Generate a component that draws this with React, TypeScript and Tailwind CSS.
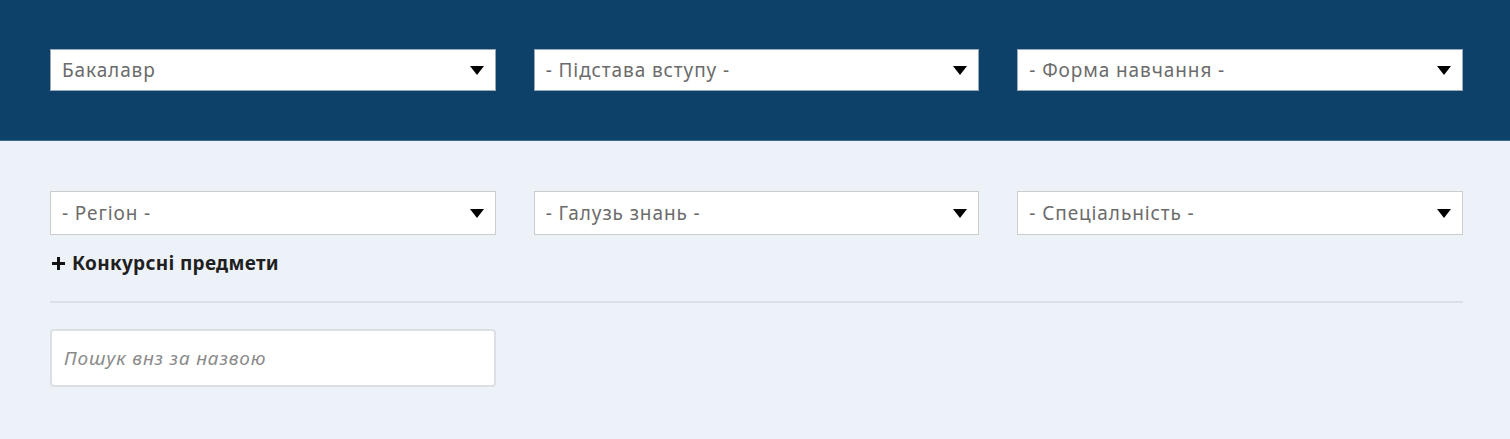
import { useState } from 'react';

const topSelects = ['Бакалавр', '- Підстава вступу -', '- Форма навчання -'];
const bottomSelects = ['- Регіон -', '- Галузь знань -', '- Спеціальність -'];

function Caret() {
  return (
    <svg width="14" height="9" viewBox="0 0 14 9" className="shrink-0">
      <path d="M0 0 H14 L7 9 Z" fill="#000" />
    </svg>
  );
}

function SelectBox({ label, dark }: { label: string; dark?: boolean }) {
  return (
    <div
      className={`flex items-center justify-between bg-white pl-[11px] pr-[11px] ${
        dark ? 'h-[42px] border border-[#9aa7b4]' : 'h-[44px] border border-[#cccccc]'
      }`}
    >
      <span className="text-[19px] text-[#6b6b6b] tracking-[0.9px]">{label}</span>
      <Caret />
    </div>
  );
}

export default function App() {
  const [query, setQuery] = useState('');

  return (
    <div className="w-[1510px] h-[439px] bg-[#edf2f9] font-['Noto_Sans','Open_Sans',sans-serif]">
      {/* top filters */}
      <div className="bg-[#0d416a] h-[141px] pt-[49px] px-[50px] border-b border-[#3d6b8c]">
        <div className="grid grid-cols-3 gap-x-[38px] w-[1413px]">
          {topSelects.map((s) => (
            <SelectBox key={s} label={s} dark />
          ))}
        </div>
      </div>

      {/* bottom filters */}
      <div className="px-[50px] pt-[50px]">
        <div className="grid grid-cols-3 gap-x-[38px] w-[1413px]">
          {bottomSelects.map((s) => (
            <SelectBox key={s} label={s} />
          ))}
        </div>

        <div className="flex items-center gap-[7px] mt-[17px] h-[22px] pl-[2px]">
          <svg width="13" height="13" viewBox="0 0 13 13">
            <path d="M5 0 H8 V5 H13 V8 H8 V13 H5 V8 H0 V5 H5 Z" fill="#111" />
          </svg>
          <span className="text-[19px] font-bold text-[#1f1f1f] tracking-[0.3px]">Конкурсні предмети</span>
        </div>

        <div className="h-[2px] bg-[#d9e0e9] w-[1413px] mt-[27px]" />

        <div className="mt-[26px] w-[446px]">
          <input
            value={query}
            onChange={(e) => setQuery(e.target.value)}
            placeholder="Пошук внз за назвою"
            className="w-full h-[58px] bg-white border-2 border-[#dcdfe3] rounded-[4px] px-[12px] text-[19px] italic text-[#555] tracking-[0.8px] placeholder:text-[#8a8a8a] outline-none"
          />
        </div>
      </div>
    </div>
  );
}
